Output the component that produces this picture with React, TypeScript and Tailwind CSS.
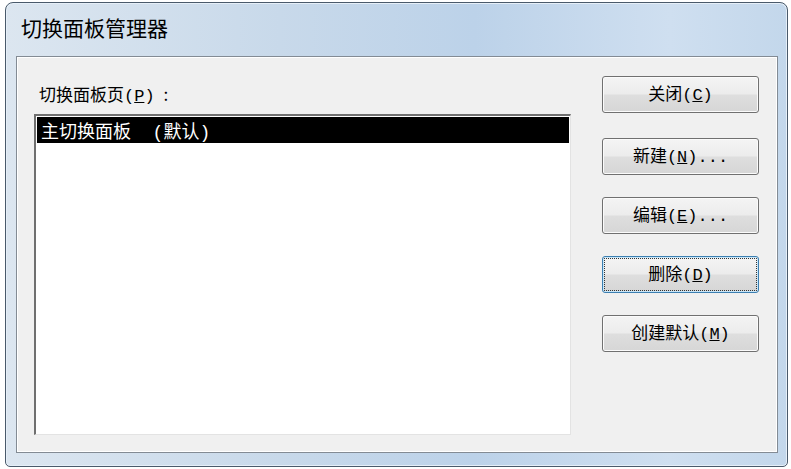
import React from "react";

const font = { fontFamily: '"Noto Sans CJK SC", "Noto Sans", sans-serif' };
const mono = "font-['Liberation_Mono',monospace]";

function Btn({
  label,
  k,
  tail,
  focused,
}: {
  label: string;
  k: string;
  tail?: string;
  focused?: boolean;
}) {
  return (
    <div
      className={
        "h-[37px] w-[157px] rounded-[3px] border flex items-center justify-center text-[17px] leading-none text-black " +
        "bg-[linear-gradient(to_bottom,#f4f4f4_0%,#ececec_48%,#dedede_52%,#d6d6d6_100%)] " +
        (focused
          ? "border-[#3c7fb1] shadow-[inset_0_0_0_1px_#c8e6f8] outline-1 outline-dotted outline-offset-[-3px] outline-[#333]"
          : "border-[#707070] shadow-[inset_0_0_0_1px_#fbfbfb]")
      }
    >
      <span className="pb-[1px] whitespace-pre">
        {label}
        <span className={mono}>
          (<u>{k}</u>){tail}
        </span>
      </span>
    </div>
  );
}

export default function App() {
  return (
    <div className="w-[791px] h-[469px] bg-white pt-[2px] pl-[5px]" style={font}>
      <div className="w-[783px] h-[465px] rounded-t-[8px] rounded-b-[5px] border border-[#4a5a6b] flex flex-col bg-[linear-gradient(to_right,#dce6f0_0%,#c8d9ea_35%,#bcd2e9_60%,#cfdff0_85%,#c3d7eb_100%)] shadow-[inset_0_0_0_1px_#e6eff8]">
        <div className="h-[53px] pl-[15px] pt-[10px] text-[21px] leading-[28px] text-black">
          切换面板管理器
        </div>
        <div className="ml-[10px] mr-[9px] mb-[13px] flex-1 border border-[#838b94] bg-[#f0f0f0] shadow-[inset_0_0_0_1px_#ffffff] flex pl-[17px] pt-[19px]">
          <div className="flex flex-col pt-[8px]">
            <div className="h-[30px] pl-[5px] text-[17px] leading-[20px] text-black whitespace-pre">
              切换面板页
              <span className={mono}>
                (<u>P</u>)
              </span>
              <span className="ml-[9px]">:</span>
            </div>
            <div className="w-[537px] h-[321px] border-t-2 border-l-2 border-t-[#6f6f6f] border-l-[#6f6f6f] border-r border-b border-r-[#e3e3e3] border-b-[#e3e3e3] bg-white p-[1px]">
              <div className="h-[26px] bg-black text-white text-[18px] leading-[26px] pl-[4px] whitespace-pre">
                主切换面板<span className={mono}>{"  ("}</span>默认
                <span className={mono}>)</span>
              </div>
            </div>
          </div>
          <div className="ml-[31px] flex flex-col gap-[22px]">
            <div className="mb-[3px]">
              <Btn label="关闭" k="C" />
            </div>
            <Btn label="新建" k="N" tail="..." />
            <Btn label="编辑" k="E" tail="..." />
            <Btn label="删除" k="D" focused />
            <Btn label="创建默认" k="M" />
          </div>
        </div>
      </div>
    </div>
  );
}
